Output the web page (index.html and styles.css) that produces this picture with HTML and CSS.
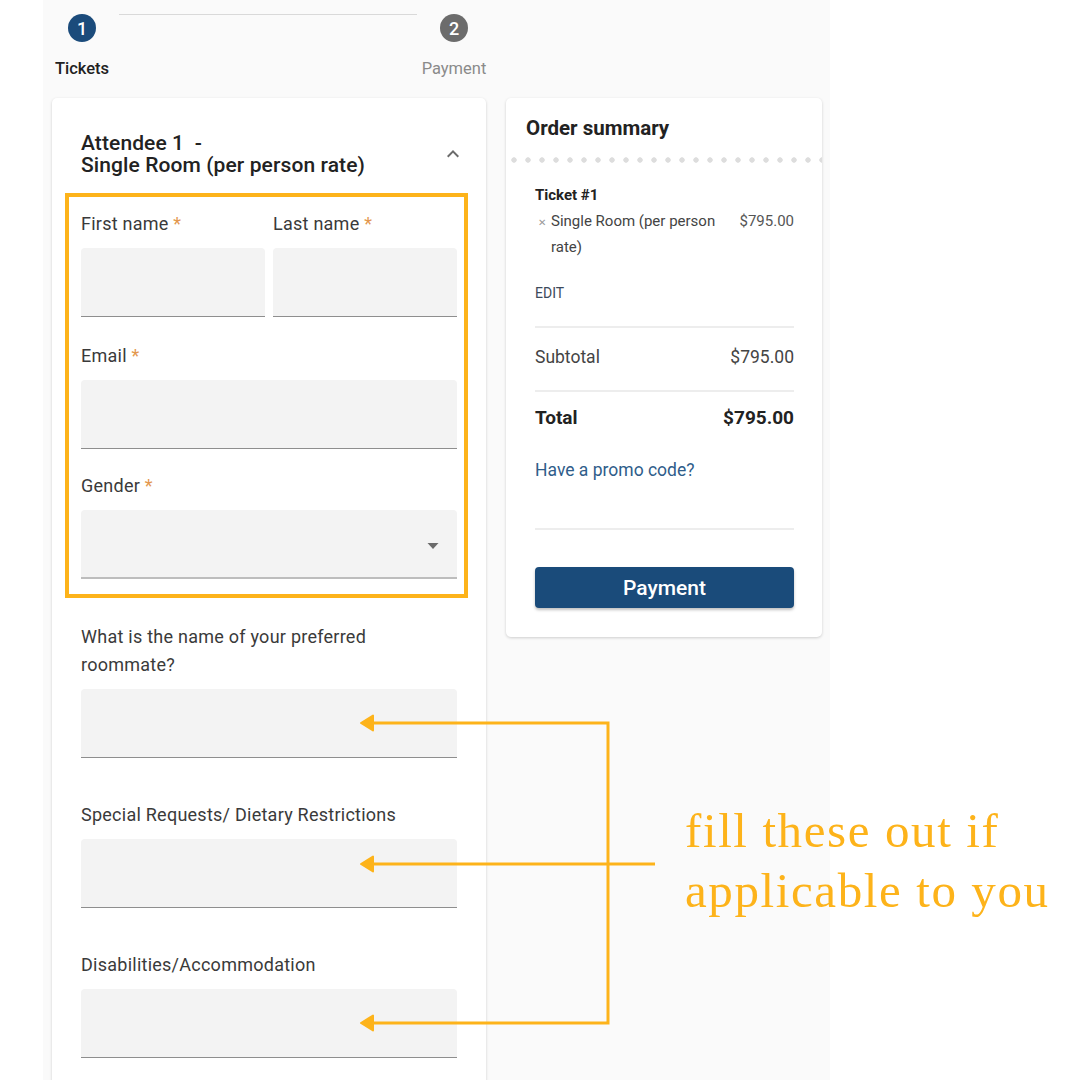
FILE: index.html
```html
<!DOCTYPE html>
<html lang="en">
<head>
<meta charset="utf-8">
<title>Tickets</title>
<link rel="stylesheet" href="styles.css">
</head>
<body>
<div class="page">
  <div class="panel">
    <div class="stepper">
      <div class="step">
        <span class="dot">1</span>
        <span class="step-label">Tickets</span>
      </div>
      <div class="step-line"></div>
      <div class="step step-wide">
        <span class="dot dot-gray">2</span>
        <span class="step-label step-label-muted">Payment</span>
      </div>
    </div>

    <div class="columns">
      <section class="card form-card">
        <div class="att-header">
          <h2 class="att-title">Attendee 1&nbsp; -<br>Single Room (per person rate)</h2>
          <svg class="chevron" width="24" height="24" viewBox="0 0 24 24"><path d="M12 8l-6 6 1.41 1.41L12 10.83l4.59 4.58L18 14z" fill="#6b6b6b"/></svg>
        </div>

        <div class="required-group">
          <div class="row">
            <div class="field">
              <label class="label">First name <span class="req">*</span></label>
              <div class="input"></div>
            </div>
            <div class="field">
              <label class="label">Last name <span class="req">*</span></label>
              <div class="input"></div>
            </div>
          </div>
          <div class="field field-email">
            <label class="label">Email <span class="req">*</span></label>
            <div class="input"></div>
          </div>
          <div class="field field-last">
            <label class="label">Gender <span class="req">*</span></label>
            <div class="input select">
              <svg class="caret" width="24" height="24" viewBox="0 0 24 24"><path d="M6.5 10l5.5 6 5.5-6z" fill="#6b6b6b"/></svg>
            </div>
          </div>
          <div class="highlight"></div>
        </div>

        <div class="field field-opt">
          <label class="label label-tall">What is the name of your preferred roommate?</label>
          <div class="input"></div>
        </div>
        <div class="field field-opt">
          <label class="label">Special Requests/ Dietary Restrictions</label>
          <div class="input"></div>
        </div>
        <div class="field field-opt">
          <label class="label">Disabilities/Accommodation</label>
          <div class="input"></div>
        </div>
      </section>

      <aside class="card summary-card">
        <h3 class="summary-title">Order summary</h3>
        <div class="dots"></div>
        <div class="summary-body">
          <div class="ticket-name">Ticket #1</div>
          <div class="item">
            <span class="item-x">&#x2715;</span>
            <span class="item-text">Single Room (per person rate)</span>
            <span class="item-price">$795.00</span>
          </div>
          <div class="edit">EDIT</div>
          <div class="divider"></div>
          <div class="sum-row sub-row"><span>Subtotal</span><span>$795.00</span></div>
          <div class="divider"></div>
          <div class="sum-row total-row"><span>Total</span><span>$795.00</span></div>
          <div class="promo">Have a promo code?</div>
          <div class="divider"></div>
          <button class="pay-btn">Payment</button>
        </div>
      </aside>
    </div>
  </div>

  <svg class="annot-lines" width="1080" height="1080" viewBox="0 0 1080 1080">
    <g stroke="#fdb31a" stroke-width="3" fill="none">
      <path d="M370 723 H608 V1023 H370"/>
      <path d="M370 864 H655"/>
    </g>
    <g fill="#fdb31a" stroke="#fdb31a" stroke-width="2" stroke-linejoin="round">
      <polygon points="361,723 373,715.5 373,730.5"/>
      <polygon points="361,864 373,856.5 373,871.5"/>
      <polygon points="361,1023 373,1015.5 373,1030.5"/>
    </g>
  </svg>
  <p class="annot-text">fill these out if<br>applicable to you</p>
</div>
</body>
</html>
```

FILE: styles.css
```css
* { box-sizing: border-box; }

body {
  margin: 0;
  background: #ffffff;
  font-family: Roboto, "Liberation Sans", Arial, sans-serif;
  color: #333333;
}

.page {
  position: relative;
  width: 1080px;
  height: 1080px;
  overflow: hidden;
}

.panel {
  margin-left: 43px;
  width: 787px;
  min-height: 1200px;
  background: #fafafa;
  padding: 14px 0 0 9px;
}

/* stepper */
.stepper {
  display: flex;
  align-items: flex-start;
  width: 434px;
}
.step {
  display: flex;
  flex-direction: column;
  align-items: center;
  width: 60px;
}
.step-wide { width: 64px; }
.dot {
  width: 28px;
  height: 28px;
  border-radius: 50%;
  background: #1b4b7b;
  color: #ffffff;
  font-size: 18px;
  font-weight: 500;
  display: flex;
  align-items: center;
  justify-content: center;
}
.dot-gray { background: #6c6c6c; }
.step-label {
  margin-top: 18px;
  font-size: 16.5px;
  line-height: 18px;
  font-weight: 500;
  color: #222222;
  white-space: nowrap;
}
.step-label-muted {
  font-weight: 400;
  color: #8a8a8a;
}
.step-line {
  flex: 1;
  height: 1px;
  background: #d9d9d9;
  margin: 0 5px 0 7px;
}

/* columns */
.columns {
  display: flex;
  align-items: flex-start;
  gap: 20px;
  margin-top: 20px;
}
.card {
  background: #ffffff;
  border-radius: 5px;
  box-shadow: 0 1px 3px rgba(0, 0, 0, 0.18);
}

/* form card */
.form-card {
  width: 434px;
  padding: 34px 29px 40px;
}
.att-header {
  display: flex;
  align-items: center;
  justify-content: space-between;
  margin-bottom: 36px;
}
.att-title {
  margin: 0;
  font-size: 21px;
  line-height: 22px;
  font-weight: 500;
  letter-spacing: 0.1px;
  color: #222222;
}
.chevron { margin-right: -8px; }

.required-group { position: relative; }
.highlight {
  position: absolute;
  top: -19px;
  left: -16px;
  right: -11px;
  bottom: -19px;
  border: 4px solid #fdb31a;
}

.row {
  display: flex;
  gap: 8px;
}
.row .field { flex: 1; }
.field { margin-bottom: 27px; }
.field-email { margin-bottom: 25px; }
.field-last { margin-bottom: 44px; }
.field-opt { margin-bottom: 45px; }

.label {
  display: block;
  font-size: 18px;
  line-height: 24px;
  letter-spacing: 0.25px;
  color: #3a3a3a;
  margin-bottom: 12px;
}
.label-tall {
  line-height: 28px;
  margin-bottom: 10px;
  padding-right: 40px;
}
.req { color: #e3974e; }

.input {
  position: relative;
  height: 69px;
  background: #f3f3f3;
  border-radius: 4px 4px 0 0;
  border-bottom: 1px solid #8e8e8e;
}
.select { border-bottom: 2px solid #bdbdbd; }
.caret {
  position: absolute;
  right: 12px;
  top: 23px;
}

/* summary */
.summary-card {
  width: 316px;
  padding-bottom: 29px;
}
.summary-title {
  margin: 0;
  padding: 18px 20px 0;
  font-size: 20.5px;
  line-height: 24px;
  font-weight: 700;
  color: #222222;
}
.dots {
  margin-top: 17px;
  height: 6px;
  background-image: radial-gradient(circle, #dddddd 2.4px, transparent 3px);
  background-size: 14px 6px;
  background-position: 1px 0;
}
.summary-body {
  padding: 0 28px 0 29px;
}
.ticket-name {
  margin-top: 22px;
  font-size: 15px;
  line-height: 20px;
  font-weight: 700;
  color: #222222;
}
.item {
  display: flex;
  align-items: flex-start;
  margin-top: 3px;
  font-size: 15px;
  line-height: 26px;
  color: #444444;
}
.item-x {
  width: 16px;
  flex: none;
  font-size: 10px;
  color: #999999;
  padding-left: 3px;
  padding-top: 2px;
}
.item-text {
  flex: 1;
  padding-right: 16px;
}
.item-price {
  flex: none;
  color: #555555;
}
.edit {
  margin-top: 24px;
  font-size: 14px;
  line-height: 18px;
  color: #3d4a5a;
  margin-bottom: 24px;
}
.divider {
  height: 2px;
  background: #ededed;
}
.sum-row {
  display: flex;
  justify-content: space-between;
  font-size: 17.5px;
  line-height: 22px;
}
.sub-row {
  padding: 18px 0 22px;
  color: #444444;
}
.total-row {
  padding-top: 15px;
  font-size: 19px;
  font-weight: 700;
  color: #222222;
}
.promo {
  margin-top: 30px;
  margin-bottom: 47px;
  font-size: 17.5px;
  line-height: 22px;
  color: #2f5d8a;
}
.pay-btn {
  display: block;
  width: 100%;
  height: 41px;
  margin-top: 37px;
  border: none;
  border-radius: 4px;
  background: #1a4b7a;
  color: #ffffff;
  font-family: Roboto, "Liberation Sans", Arial, sans-serif;
  font-size: 21px;
  font-weight: 500;
  box-shadow: 0 2px 3px rgba(0, 0, 0, 0.25);
}

/* annotation overlay */
.annot-lines {
  position: absolute;
  top: 0;
  left: 0;
  pointer-events: none;
}
.annot-text {
  position: absolute;
  left: 685px;
  top: 801px;
  margin: 0;
  font-family: "Liberation Serif", "Times New Roman", serif;
  font-size: 49px;
  line-height: 60px;
  letter-spacing: 1.6px;
  color: #fdb31a;
  white-space: nowrap;
}
```
